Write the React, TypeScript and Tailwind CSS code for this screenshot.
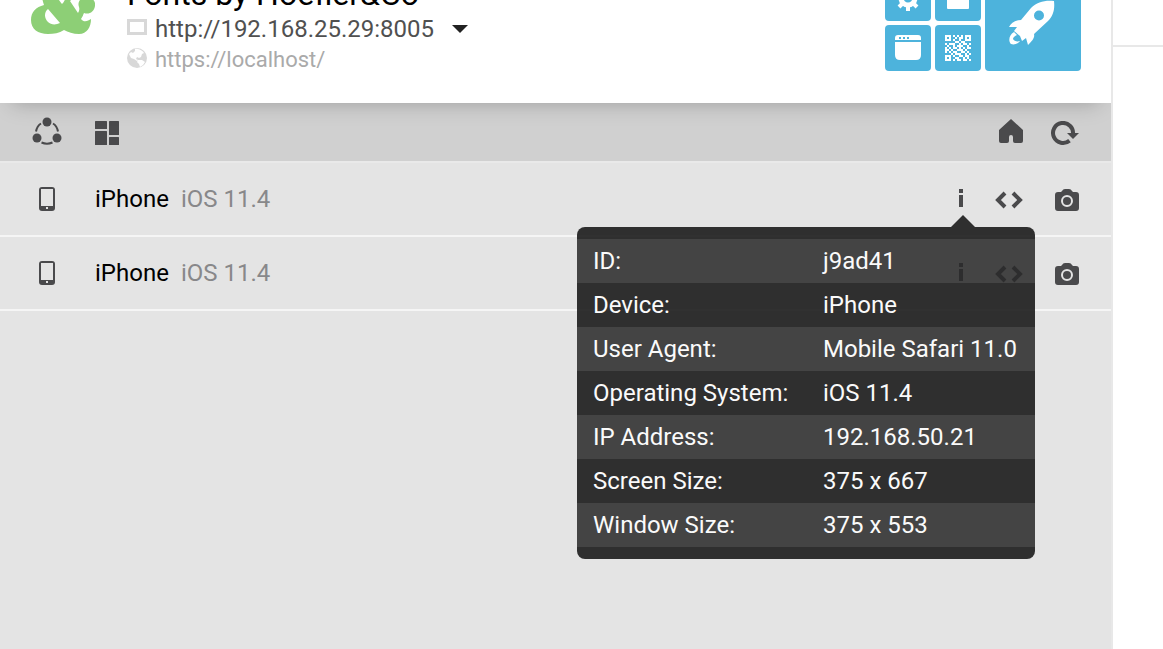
import { useState } from 'react';

const devices = [
  {
    id: 'j9ad41',
    name: 'iPhone',
    agent: 'Mobile Safari 11.0',
    os: 'iOS 11.4',
    ip: '192.168.50.21',
    screen: '375 x 667',
    window: '375 x 553',
  },
  {
    id: 'k2be07',
    name: 'iPhone',
    agent: 'Mobile Safari 11.0',
    os: 'iOS 11.4',
    ip: '192.168.50.22',
    screen: '375 x 667',
    window: '375 x 553',
  },
];

type Device = (typeof devices)[number];

const qrRows = [
  '1110101010111',
  '1010010110101',
  '1110100100111',
  '0000011011000',
  '1011100101101',
  '0100101110010',
  '1010110101011',
  '1101001110100',
  '1010110011010',
  '0001011100101',
  '1110100110110',
  '1010011001010',
  '1110101101101',
];

function Logo() {
  return (
    <svg width="64" height="64" viewBox="0 0 64 64" fill="#8dcf76" aria-hidden="true">
      <path
        fillRule="evenodd"
        d="M27 0C40 0 46 8 46 16C46 24 43 28 39 31L47 43Q49 40 48 37C46 32 50 27 55 27C61 27 65 31 64 36C63 42 58 45 53 43C52 45 52 46 50 49C53 53 57 51 60 49C60 57 56 64 48 64C42 64 37 62 33 60C28 63 23 64 17 64C7 64 0 59 0 50C0 42 5 37 13 35C11 29 10 24 10 17C10 7 17 0 27 0ZM17 39C13 42 13 48 17 52C20 55 25 55 29 53ZM26 8C21 12 21 22 31 34C38 28 36 9 26 8Z"
      />
    </svg>
  );
}

function QrIcon() {
  return (
    <svg width="26" height="26" viewBox="0 0 13 13" fill="#fff" shapeRendering="crispEdges" aria-hidden="true">
      {qrRows.map((row, y) =>
        row.split('').map((cell, x) =>
          cell === '1' ? <rect key={`${x}-${y}`} x={x} y={y} width="1" height="1" /> : null
        )
      )}
    </svg>
  );
}

function GearIcon() {
  return (
    <svg width="26" height="26" viewBox="0 0 26 26" fill="none" stroke="#fff" aria-hidden="true">
      <circle cx="13" cy="13" r="7" strokeWidth="5" />
      <path
        strokeWidth="4"
        d="M13 0V5M13 21V26M0 13H5M21 13H26M4 4L7 7M19 19L22 22M22 4L19 7M7 19L4 22"
      />
    </svg>
  );
}

function RocketIcon() {
  return (
    <svg width="48" height="46" viewBox="0 0 48 46" fill="#fff" aria-hidden="true">
      <path
        fillRule="evenodd"
        d="M45 1C46 10 44 16 39 21L25 34C26 38 23 41 19 45L17 38L13 41L11 36L5 31L8 27L0 27C2 23 6 20 12 20L22 8C28 2 36 0 45 1ZM30 10.500A5 5 0 1 0 30 20.500A5 5 0 1 0 30 10.500Z"
      />
      <path d="M5 32C0 35 -1 41 2 44C5 45 9 44 11 41C8 42 5 41 4 39C4 37 6 36 8 35Z" />
    </svg>
  );
}

function PhoneIcon() {
  return (
    <svg width="16" height="24" viewBox="0 0 16 24" aria-hidden="true">
      <rect width="16" height="24" rx="3" fill="#4a4a4c" />
      <rect x="2" y="2" width="12" height="17" fill="#e4e4e4" />
      <rect x="7" y="20" width="2" height="2" fill="#e4e4e4" />
    </svg>
  );
}

function DeviceInfo({ device }: { device: Device }) {
  const rows = [
    ['ID:', device.id],
    ['Device:', device.name],
    ['User Agent:', device.agent],
    ['Operating System:', device.os],
    ['IP Address:', device.ip],
    ['Screen Size:', device.screen],
    ['Window Size:', device.window],
  ];

  return (
    <div className="absolute top-[52px] -right-[50px] z-20 w-[458px] opacity-85">
      <svg className="ml-[374px] block" width="24" height="12" viewBox="0 0 24 12" fill="#101010" aria-hidden="true">
        <path d="M0 12L12 0L24 12Z" />
      </svg>
      <div className="rounded-lg bg-[#101010] py-3 text-white">
        <table className="w-full table-fixed text-left">
          <tbody>
            {rows.map(([label, value]) => (
              <tr key={label} className="h-11 odd:bg-[#292929]">
                <th scope="row" className="w-[230px] pl-4 font-normal whitespace-nowrap">{label}</th>
                <td className="pl-4 whitespace-nowrap">{value}</td>
              </tr>
            ))}
          </tbody>
        </table>
      </div>
    </div>
  );
}

export default function App() {
  const [openId, setOpenId] = useState<string | null>('j9ad41');

  return (
    <div className="flex min-h-screen overflow-hidden bg-white font-[Roboto,sans-serif] text-2xl">
      <main className="flex min-w-0 flex-1 flex-col bg-[#e4e4e4]">
        {/* Site header */}
        <header className="relative z-10 flex h-[103px] items-end bg-white pr-[30px] pl-[31px] shadow-[0_12px_20px_-12px_rgba(0,0,0,0.25)]">
          <div className="pb-[69px]">
            <Logo />
          </div>
          <div className="ml-8 pb-7">
            <h1 className="text-[32px] leading-[38px] text-black">Fonts by Hoefler&amp;Co</h1>
            <div className="flex h-8 items-center">
              <span className="mb-1 h-4 w-5 border-3 border-[#d8d8d8]" />
              <a href="#site" className="ml-2 text-[#505050]">http://192.168.25.29:8005</a>
              <button type="button" aria-label="Choose address" className="ml-[18px]">
                <svg width="16" height="8" viewBox="0 0 16 8" fill="#222" aria-hidden="true">
                  <path d="M0 0H16L8 8Z" />
                </svg>
              </button>
            </div>
            <div className="flex h-[30px] items-center">
              <svg width="20" height="20" viewBox="0 0 20 20" className="mb-1" aria-hidden="true">
                <circle cx="10" cy="10" r="10" fill="#d8d8d8" />
                <path
                  fill="#fff"
                  d="M8 1C11 0 16 3 17 5L15 6L14 9L12 10L10 9L9 11L11 12L10 13L7 11L4 10L2 6L4 4L6 5L8 3ZM11 12L15 12L18 14L16 17L13 19L12 16L10 14Z"
                />
              </svg>
              <a href="#local" className="ml-2 text-[22px] text-[#aaa]">https://localhost/</a>
            </div>
          </div>

          {/* Header actions */}
          <div className="ml-auto flex gap-1 pb-8">
            <div className="grid grid-cols-2 gap-1">
              <button type="button" aria-label="Settings" className="flex size-[46px] items-center justify-center rounded bg-[#4db3dc]">
                <GearIcon />
              </button>
              <button type="button" aria-label="Folder" className="flex size-[46px] items-center justify-center rounded bg-[#4db3dc]">
                <svg width="22" height="22" viewBox="0 0 22 22" fill="#fff" aria-hidden="true">
                  <rect width="22" height="22" rx="1" />
                </svg>
              </button>
              <button type="button" aria-label="Browser" className="flex size-[46px] items-center justify-center rounded bg-[#4db3dc]">
                <svg width="28" height="26" viewBox="0 0 28 26" aria-hidden="true">
                  <path fill="#fff" d="M4 0H24Q27 0 27 3V5H1V3Q1 0 4 0ZM1 7H27V20Q27 25 22 25H6Q1 25 1 20Z" />
                  <path fill="#4db3dc" d="M5 2H7V4H5ZM9 2H11V4H9ZM13 2H15V4H13Z" />
                </svg>
              </button>
              <button type="button" aria-label="QR code" className="flex size-[46px] items-center justify-center rounded bg-[#4db3dc]">
                <QrIcon />
              </button>
            </div>
            <button type="button" aria-label="Launch" className="flex size-24 items-center justify-center rounded bg-[#4db3dc]">
              <RocketIcon />
            </button>
          </div>
        </header>

        {/* Toolbar */}
        <div className="flex h-[60px] items-center border-b-2 border-[#e9e9e9] bg-[#d0d0d0] pt-px pr-8 pl-8">
          <button type="button" aria-label="Sync">
            <svg width="30" height="32" viewBox="0 0 30 32" fill="#4a4a4c" aria-hidden="true">
              <circle cx="15" cy="5" r="4.500" />
              <circle cx="5" cy="21" r="4.500" />
              <circle cx="25" cy="21" r="4.500" />
              <path
                fill="none"
                stroke="#4a4a4c"
                strokeWidth="2"
                d="M4 14.500Q5 9 9 6.500M26 14.500Q25 9 21 6.500M9.500 25.500Q15 28 20.500 25.500"
              />
            </svg>
          </button>
          <button type="button" aria-label="Dashboard" className="ml-[33px]">
            <svg width="24" height="24" viewBox="0 0 24 24" fill="#4a4a4c" aria-hidden="true">
              <rect width="12" height="8" rx=".5" />
              <rect y="10" width="12" height="14" rx=".5" />
              <rect x="14" width="10" height="14" rx=".5" />
              <rect x="14" y="16" width="10" height="8" rx=".5" />
            </svg>
          </button>
          <button type="button" aria-label="Home" className="ml-auto">
            <svg width="24" height="28" viewBox="0 0 24 28" fill="#4a4a4c" aria-hidden="true">
              <path d="M12 0L24 11V22Q24 24 22 24H16Q14 24 14 22V18Q14 16 12 16Q10 16 10 18V22Q10 24 8 24H2Q0 24 0 22V11Z" />
            </svg>
          </button>
          <button type="button" aria-label="Reload" className="ml-7">
            <svg width="28" height="24" viewBox="0 0 28 24" fill="#4a4a4c" aria-hidden="true">
              <path fill="none" stroke="#4a4a4c" strokeWidth="4" d="M22 13A10 10 0 1 0 18.500 19.600" />
              <path d="M16 12H28L22 18Z" />
            </svg>
          </button>
        </div>

        {/* Connected devices */}
        <ul>
          {devices.map((device) => (
            <li key={device.id} className="flex h-[74px] items-center border-b-2 border-[#f5f5f5] pr-[10px] pl-[39px]">
              <PhoneIcon />
              <span className="ml-10 text-black">{device.name}</span>
              <span className="ml-3 text-[#88888a]">{device.os}</span>
              <div className="ml-auto flex h-full items-center">
                <div className="relative flex h-full w-12 items-center justify-center">
                  <button
                    type="button"
                    aria-label="Device info"
                    onClick={() => setOpenId(openId === device.id ? null : device.id)}
                  >
                    <svg width="4" height="20" viewBox="0 0 4 20" fill="#4a4a4c" aria-hidden="true">
                      <path d="M0 0H4V4H0ZM0 6H4V18H0Z" />
                    </svg>
                  </button>
                  {openId === device.id && <DeviceInfo device={device} />}
                </div>
                <button type="button" aria-label="View source" className="flex w-12 justify-center pt-0.5">
                  <svg width="28" height="18" viewBox="0 0 28 18" fill="none" stroke="#4a4a4c" strokeWidth="4" aria-hidden="true">
                    <path d="M10 2L3 9L10 16M18 2L25 9L18 16" />
                  </svg>
                </button>
                <button type="button" aria-label="Screenshot" className="flex w-[68px] justify-center pt-0.5">
                  <svg width="24" height="22" viewBox="0 0 24 22" aria-hidden="true">
                    <path
                      fill="#4a4a4c"
                      d="M7 2Q8 0 10 0H14Q16 0 17 2L18 3H21Q24 3 24 6V19Q24 22 21 22H3Q0 22 0 19V6Q0 3 3 3H6Z"
                    />
                    <circle cx="12" cy="12" r="5" fill="none" stroke="#e4e4e4" strokeWidth="2" />
                  </svg>
                </button>
              </div>
            </li>
          ))}
        </ul>
      </main>

      {/* Preview pane */}
      <aside className="relative z-10 w-[52px] shrink-0 border-l-2 border-[#e8e8e8] bg-white">
        <div className="h-[47px] border-b-2 border-[#e8e8e8]" />
      </aside>
    </div>
  );
}
